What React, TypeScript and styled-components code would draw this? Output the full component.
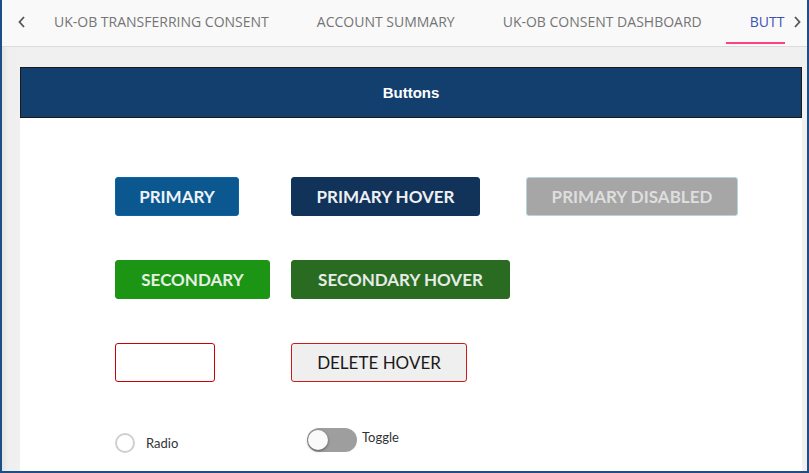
import * as React from 'react';
import styled, { createGlobalStyle } from 'styled-components';

const GlobalStyle = createGlobalStyle`
  html, body {
    margin: 0;
    padding: 0;
    width: 809px;
    height: 473px;
    overflow: hidden;
  }
  * {
    box-sizing: border-box;
  }
`;

const Frame = styled.div`
  width: 809px;
  height: 473px;
  border-left: 2px solid #1c4f86;
  border-right: 2px solid #1c4f86;
  border-bottom: 2px solid #1c4f86;
  background: #f0f0f0;
  display: flex;
  flex-direction: column;
  overflow: hidden;
`;

const TabBar = styled.div`
  height: 47px;
  flex: 0 0 47px;
  background: #f9f9f9;
  border-bottom: 1px solid #dcdcdc;
  display: flex;
  align-items: stretch;
  overflow: hidden;
`;

interface ArrowProps {
  side: 'left' | 'right';
}

const Arrow = styled.div<ArrowProps>`
  width: ${(p) => (p.side === 'left' ? 28 : 21)}px;
  flex: 0 0 ${(p) => (p.side === 'left' ? 28 : 21)}px;
  display: flex;
  align-items: center;
  justify-content: ${(p) => (p.side === 'left' ? 'flex-end' : 'center')};
  padding: ${(p) => (p.side === 'left' ? '0 3px 3px 0' : '0 0 3px 0')};
`;

const TabList = styled.div`
  flex: 1;
  display: flex;
  overflow: hidden;
`;

interface TabProps {
  active?: boolean;
}

const Tab = styled.div<TabProps>`
  flex: 0 0 auto;
  padding: 0 24px 3px;
  display: flex;
  align-items: center;
  font-family: 'Open Sans', sans-serif;
  font-size: 14px;
  color: ${(p) => (p.active ? '#3f51b5' : '#757575')};
  position: relative;
  white-space: nowrap;
  &::after {
    content: '';
    display: ${(p) => (p.active ? 'block' : 'none')};
    position: absolute;
    left: 0;
    right: 0;
    bottom: 2px;
    height: 2px;
    background: #ff4081;
  }
`;

const ClippedTab = styled(Tab)`
  width: 59px;
  overflow: hidden;
  padding-right: 0;
  justify-content: flex-start;
`;

const Content = styled.div`
  flex: 1;
  padding: 20px 5px 0 18px;
  display: flex;
  background: linear-gradient(to right, #e4e4e4 0px, #efefef 6px, #f0f0f0 18px);
`;

const Panel = styled.div`
  flex: 1;
  background: #fff;
  display: flex;
  flex-direction: column;
`;

const PanelHeader = styled.div`
  height: 51px;
  background: #133f6f;
  border: 1px solid #1a1a1a;
  display: flex;
  align-items: center;
  justify-content: center;
  color: #fff;
  font-family: 'Liberation Sans', Arial, sans-serif;
  font-weight: bold;
  font-size: 15px;
`;

const PanelBody = styled.div`
  padding: 59px 0 0 95px;
  display: grid;
  grid-template-columns: 176px 235px auto;
  grid-auto-rows: 39px;
  row-gap: 44px;
`;

type Variant = 'primary' | 'primaryHover' | 'disabled' | 'secondary' | 'secondaryHover' | 'delete' | 'deleteHover';

const variantStyles: Record<Variant, { bg: string; fg: string; border: string }> = {
  primary: { bg: '#0b5890', fg: '#eef2f6', border: '#0b64a8' },
  primaryHover: { bg: '#11335a', fg: '#eef0f4', border: '#11335a' },
  disabled: { bg: '#a6a6a6', fg: '#dedede', border: '#b7d3de' },
  secondary: { bg: '#1b9513', fg: '#e6efe6', border: '#1b9513' },
  secondaryHover: { bg: '#2a6b22', fg: '#e6ece6', border: '#2a6b22' },
  delete: { bg: '#ffffff', fg: '#222', border: '#cc0000' },
  deleteHover: { bg: '#efefef', fg: '#1a1a1a', border: '#cc1a1a' },
};

interface ButtonProps {
  variant: Variant;
  w: number;
}

const Button = styled.button<ButtonProps>`
  width: ${(p) => p.w}px;
  height: 39px;
  border-radius: 3px;
  border: 1px solid ${(p) => variantStyles[p.variant].border};
  background: ${(p) => variantStyles[p.variant].bg};
  color: ${(p) => variantStyles[p.variant].fg};
  font-family: Lato, 'Open Sans', sans-serif;
  font-weight: ${(p) => (p.variant === 'deleteHover' ? 400 : 700)};
  font-size: 17px;
  padding: 0 0 1px;
  display: flex;
  align-items: center;
  justify-content: center;
  cursor: pointer;
`;

const ControlRow = styled.div`
  grid-column: 1 / 4;
  display: grid;
  grid-template-columns: 192px auto;
  align-items: center;
  margin-top: -11px;
`;

const RadioLabel = styled.label`
  display: flex;
  align-items: center;
  gap: 11px;
  font-family: Lato, 'Open Sans', sans-serif;
  font-size: 13px;
  color: #333;
  margin-top: 6px;
`;

const RadioCircle = styled.span`
  width: 20px;
  height: 20px;
  border-radius: 50%;
  border: 2px solid #cfcfcf;
  background: #fff;
  display: inline-block;
`;

const ToggleLabel = styled.label`
  display: flex;
  align-items: center;
  gap: 5px;
  font-family: Lato, 'Open Sans', sans-serif;
  font-size: 13px;
  color: #333;
`;

const ToggleTrack = styled.span`
  width: 50px;
  height: 24px;
  border-radius: 12px;
  background: #9e9e9e;
  position: relative;
  display: inline-block;
`;

const ToggleKnob = styled.span`
  position: absolute;
  left: 1px;
  top: 2px;
  width: 20px;
  height: 20px;
  border-radius: 50%;
  background: #fafafa;
  box-shadow: 0 1px 3px rgba(0, 0, 0, 0.45);
`;

const ToggleText = styled.span`
  margin-top: -6px;
`;

const Chevron = ({ dir }: { dir: 'left' | 'right' }): JSX.Element => (
  <svg width="10" height="14" viewBox="0 0 10 14">
    <path
      d={dir === 'left' ? 'M7 2 L2.5 7 L7 12' : 'M3 2 L7.5 7 L3 12'}
      fill="none"
      stroke="#555"
      strokeWidth="1.8"
    />
  </svg>
);

const App = (): JSX.Element => {
  return (
    <>
      <GlobalStyle />
      <Frame>
        <TabBar>
          <Arrow side="left">
            <Chevron dir="left" />
          </Arrow>
          <TabList>
            <Tab>UK-OB TRANSFERRING CONSENT</Tab>
            <Tab>ACCOUNT SUMMARY</Tab>
            <Tab>UK-OB CONSENT DASHBOARD</Tab>
            <ClippedTab active>BUTTONS</ClippedTab>
          </TabList>
          <Arrow side="right">
            <Chevron dir="right" />
          </Arrow>
        </TabBar>
        <Content>
          <Panel>
            <PanelHeader>Buttons</PanelHeader>
            <PanelBody>
              <Button variant="primary" w={124}>PRIMARY</Button>
              <Button variant="primaryHover" w={189}>PRIMARY HOVER</Button>
              <Button variant="disabled" w={212}>PRIMARY DISABLED</Button>
              <Button variant="secondary" w={155}>SECONDARY</Button>
              <Button variant="secondaryHover" w={219}>SECONDARY HOVER</Button>
              <span />
              <Button variant="delete" w={100} />
              <Button variant="deleteHover" w={176}>DELETE HOVER</Button>
              <span />
              <ControlRow>
                <RadioLabel>
                  <RadioCircle />
                  Radio
                </RadioLabel>
                <ToggleLabel>
                  <ToggleTrack>
                    <ToggleKnob />
                  </ToggleTrack>
                  <ToggleText>Toggle</ToggleText>
                </ToggleLabel>
              </ControlRow>
            </PanelBody>
          </Panel>
        </Content>
      </Frame>
    </>
  );
};

export default App;
